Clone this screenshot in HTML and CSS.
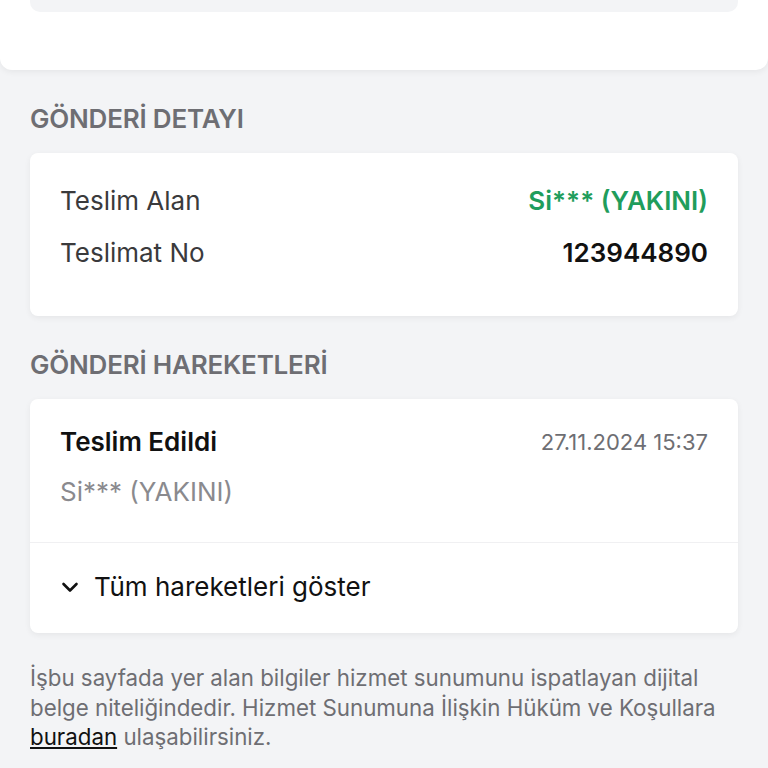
FILE: index.html
```html
<!DOCTYPE html>
<html lang="tr">
<head>
  <meta charset="UTF-8">
  <meta name="viewport" content="width=device-width, initial-scale=1.0">
  <title>Gönderi Detayı</title>
  <link rel="stylesheet" href="styles.css">
</head>
<body>
  <div class="top-card">
    <div class="top-inner"></div>
  </div>

  <div class="content">
    <h2 class="section-title">GÖNDERİ DETAYI</h2>
    <div class="card detail-card">
      <div class="row">
        <span class="label">Teslim Alan</span>
        <span class="value green">Si*** (YAKINI)</span>
      </div>
      <div class="row">
        <span class="label">Teslimat No</span>
        <span class="value">123944890</span>
      </div>
    </div>

    <h2 class="section-title">GÖNDERİ HAREKETLERİ</h2>
    <div class="card">
      <div class="move">
        <div class="move-head">
          <span class="move-title">Teslim Edildi</span>
          <span class="move-date">27.11.2024 15:37</span>
        </div>
        <div class="move-sub">Si*** (YAKINI)</div>
      </div>
      <div class="show-all">
        <svg width="20" height="20" viewBox="0 0 20 20" fill="none">
          <path d="M3.5 7l6.5 6.5 6.5-6.5" stroke="#111" stroke-width="2.6" stroke-linecap="round" stroke-linejoin="round"/>
        </svg>
        <span>Tüm hareketleri göster</span>
      </div>
    </div>

    <p class="note">İşbu sayfada yer alan bilgiler hizmet sunumunu ispatlayan dijital belge niteliğindedir. Hizmet Sunumuna İlişkin Hüküm ve Koşullara <a href="#">buradan</a> ulaşabilirsiniz.</p>
  </div>
</body>
</html>
```

FILE: styles.css
```css
body {
  margin: 0;
  background: #f3f4f6;
  font-family: Inter, "Noto Sans", sans-serif;
  color: #111;
}
.top-card {
  background: #fff;
  padding: 0 30px;
  height: 70px;
  border-radius: 0 0 12px 12px;
  box-shadow: 0 2px 6px rgba(0, 0, 0, 0.06);
}
.top-inner {
  height: 12px;
  background: #f3f4f6;
  border-radius: 0 0 10px 10px;
}
.content {
  padding: 0 30px;
}
.section-title {
  margin: 34px 0 19px;
  font-size: 26px;
  line-height: 30px;
  font-weight: 600;
  color: #6e6e73;
  letter-spacing: -0.2px;
}
.card {
  background: #fff;
  border-radius: 8px;
  box-shadow: 0 2px 6px rgba(0, 0, 0, 0.06);
}
.detail-card {
  padding: 32px 30px 47px;
  display: flex;
  flex-direction: column;
  gap: 20px;
}
.row {
  display: flex;
  justify-content: space-between;
  align-items: center;
  font-size: 26px;
  line-height: 32px;
}
.label {
  color: #3a3a3c;
}
.value {
  font-weight: 600;
  color: #111;
}
.green {
  color: #1f9d5c;
}
.move {
  padding: 27px 30px 35px;
  border-bottom: 1px solid #f0f0f2;
}
.move-head {
  display: flex;
  justify-content: space-between;
  align-items: center;
}
.move-title {
  font-size: 26px;
  line-height: 32px;
  font-weight: 600;
}
.move-date {
  font-size: 22px;
  color: #6e6e73;
}
.move-sub {
  margin-top: 19px;
  font-size: 26px;
  line-height: 30px;
  color: #8a8a8e;
}
.show-all {
  display: flex;
  align-items: center;
  gap: 14px;
  padding: 29px 30px 31px;
  font-size: 26px;
  line-height: 30px;
}
.note {
  margin: 30px 0 0;
  font-size: 22.3px;
  line-height: 29.5px;
  color: #6e6e73;
}
.note a {
  color: #111;
}
```
